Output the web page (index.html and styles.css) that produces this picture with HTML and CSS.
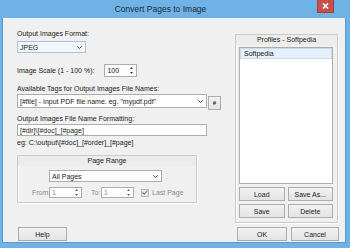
FILE: index.html
```html
<!DOCTYPE html>
<html lang="en">

<head>
    <meta charset="UTF-8">
    <meta name="viewport" content="width=device-width, initial-scale=1.0">
    <title>Convert Pages to Image</title>
    <link rel="stylesheet" href="styles.css">
</head>

<body>
    <div class="window">
        <div class="titlebar">
            <div class="title">Convert Pages to Image</div>
            <div class="close">
                <svg width="7" height="6" viewBox="0 0 7 6">
                    <path d="M1 0.5 L6 5.5 M6 0.5 L1 5.5" stroke="#fff" stroke-width="1.6" />
                </svg>
            </div>
        </div>

        <div class="content">
            <div class="main">
                <div class="left">
                    <div class="label">Output Images Format:</div>
                    <div class="combo combo-format">
                        <span>JPEG</span>
                        <svg class="arrow" width="5" height="3" viewBox="0 0 5 3"><path d="M0.3 0.3 L2.5 2.5 L4.7 0.3" fill="none" stroke="#333" stroke-width="0.9" /></svg>
                    </div>

                    <div class="row scale-row">
                        <span class="label">Image Scale (1 - 100 %):</span>
                        <div class="spin spin-scale">
                            <span>100</span>
                            <svg class="spin-arrows" width="3" height="7" viewBox="0 0 3 7"><path d="M1.5 0 L3 2 L0 2 Z M1.5 7 L3 5 L0 5 Z" fill="#333" /></svg>
                        </div>
                    </div>

                    <div class="label label-tags">Available Tags for Output Images File Names:</div>
                    <div class="row tags-row">
                        <div class="combo combo-tags">
                            <span>[#file] - Input PDF file name. eg. "mypdf.pdf"</span>
                            <svg class="arrow" width="5" height="3" viewBox="0 0 5 3"><path d="M0.3 0.3 L2.5 2.5 L4.7 0.3" fill="none" stroke="#333" stroke-width="0.9" /></svg>
                        </div>
                        <div class="btn btn-hash">#</div>
                    </div>

                    <div class="label label-format">Output Images File Name Formatting:</div>
                    <div class="textbox">[#dir]\[#doc]_[#page]</div>
                    <div class="label label-eg">eg: C:\output\[#doc]_[#order]_[#page]</div>

                    <div class="group range">
                        <div class="group-title">Page Range</div>
                        <div class="combo combo-range">
                            <span>All Pages</span>
                            <svg class="arrow" width="5" height="3" viewBox="0 0 5 3"><path d="M0.3 0.3 L2.5 2.5 L4.7 0.3" fill="none" stroke="#333" stroke-width="0.9" /></svg>
                        </div>
                        <div class="row range-row">
                            <span class="label disabled lbl-from">From:</span>
                            <div class="spin spin-small disabled">
                                <span>1</span>
                                <svg class="spin-arrows" width="3" height="7" viewBox="0 0 3 7"><path d="M1.5 0 L3 2 L0 2 Z M1.5 7 L3 5 L0 5 Z" fill="#666" /></svg>
                            </div>
                            <span class="label disabled lbl-to">To:</span>
                            <div class="spin spin-small disabled">
                                <span>1</span>
                                <svg class="spin-arrows" width="3" height="7" viewBox="0 0 3 7"><path d="M1.5 0 L3 2 L0 2 Z M1.5 7 L3 5 L0 5 Z" fill="#666" /></svg>
                            </div>
                            <div class="check">
                                <svg width="6" height="5" viewBox="0 0 6 5"><path d="M0.5 2.5 L2.2 4.2 L5.5 0.5" fill="none" stroke="#7a7a7a" stroke-width="1.1" /></svg>
                            </div>
                            <span class="label disabled">Last Page</span>
                        </div>
                    </div>
                </div>

                <div class="right">
                    <div class="group profiles">
                        <div class="group-title">Profiles - Softpedia</div>
                        <div class="list">
                            <div class="list-item selected">Softpedia</div>
                        </div>
                        <div class="btn-grid">
                            <div class="btn">Load</div>
                            <div class="btn">Save As...</div>
                            <div class="btn">Save</div>
                            <div class="btn">Delete</div>
                        </div>
                    </div>
                </div>
            </div>

            <div class="footer">
                <div class="btn btn-help">Help</div>
                <div class="footer-right">
                    <div class="btn btn-ok">OK</div>
                    <div class="btn btn-cancel">Cancel</div>
                </div>
            </div>
        </div>
    </div>
</body>

</html>
```

FILE: styles.css
```css
* {
    margin: 0;
    padding: 0;
    box-sizing: border-box;
}

body {
    width: 350px;
    height: 248px;
    overflow: hidden;
    font-family: 'Liberation Sans', Arial, sans-serif;
    font-size: 7px;
    color: #1a1a1a;
    background: #6fb3e6;
}

.window {
    width: 350px;
    height: 248px;
    background: #6fb3e6;
    padding: 0 4px 5px 2px;
    display: flex;
    flex-direction: column;
}

.titlebar {
    height: 18px;
    display: flex;
    align-items: flex-start;
}

.title {
    flex: 1;
    text-align: center;
    font-size: 8.5px;
    line-height: 18px;
    color: #1e2a36;
    padding-left: 2px;
}

.close {
    width: 17px;
    height: 13px;
    margin-right: 12px;
    background: #c8504b;
    border: 1px solid #a5403c;
    border-top: none;
    display: flex;
    align-items: center;
    justify-content: center;
}

.content {
    flex: 1;
    background: #f0f0f0;
    border: 1px solid #5b9bd0;
    border-top: none;
    padding: 11px 6px 0 14px;
    display: flex;
    flex-direction: column;
}

.main {
    display: flex;
    gap: 14px;
}

.left {
    width: 204px;
}

.right {
    width: 103px;
    padding-top: 5px;
}

.label {
    line-height: 10px;
    white-space: nowrap;
}

.row {
    display: flex;
    align-items: center;
}

/* combo boxes and text fields */
.combo,
.textbox,
.spin {
    background: #fff;
    border: 1px solid #abadb3;
    display: flex;
    align-items: center;
    padding-left: 2px;
    white-space: nowrap;
}

.combo span,
.spin span {
    flex: 1;
}

.combo .arrow {
    margin-right: 3px;
}

.combo-format {
    width: 69px;
    height: 12px;
    margin-top: 2px;
    background: #f3f7fb;
    border-color: #a3c2e4;
}

.scale-row {
    margin-top: 11px;
    height: 13px;
}

.spin-scale {
    margin-left: 10px;
    width: 33px;
    height: 13px;
}

.spin-arrows {
    margin-right: 3px;
}

.label-tags {
    margin-top: 7px;
}

.tags-row {
    align-items: flex-start;
    height: 16px;
}

.combo-tags {
    width: 190px;
    height: 14px;
}

.btn {
    background: linear-gradient(#f2f2f2, #e3e3e3);
    border: 1px solid #acacac;
    display: flex;
    align-items: center;
    justify-content: center;
    white-space: nowrap;
}

.btn-hash {
    width: 13px;
    height: 14px;
    margin-top: 2px;
    margin-left: 1px;
    font-size: 6px;
    font-weight: bold;
}

.label-format {
    margin-top: 4px;
}

.textbox {
    width: 190px;
    height: 12px;
}

.label-eg {
    margin-top: 2px;
}

/* group boxes */
.group {
    border: 1px solid #c9c9c9;
    box-shadow: inset 1px 1px 0 #fff, 1px 1px 0 #fff;
}

.group-title {
    height: 10px;
    line-height: 10px;
    text-align: center;
    background: #ececec;
}

.range {
    width: 180px;
    height: 48px;
    margin-top: 7px;
}

.combo-range {
    width: 113px;
    height: 12px;
    margin: 4px 0 0 31px;
}

.range-row {
    margin-top: 5px;
    height: 11px;
}

.disabled {
    color: #8a8a8a;
}

.lbl-from {
    margin-left: 14px;
    width: 17px;
}

.spin-small {
    width: 33px;
    height: 11px;
}

.lbl-to {
    margin-left: 9px;
    width: 10px;
}

.check {
    width: 8px;
    height: 8px;
    margin: 0 3px 0 7px;
    border: 1px solid #bcbcbc;
    background: #e6e6e6;
    display: flex;
    align-items: center;
    justify-content: center;
}

.profiles {
    height: 189px;
    padding: 0 4px 4px 3px;
}

.profiles .group-title {
    margin: 0 -4px 0 -3px;
}

.list {
    height: 137px;
    margin-top: 2px;
    background: #fff;
    border: 1px solid #abadb3;
}

.list-item {
    height: 11px;
    line-height: 11px;
    padding-left: 3px;
}

.list-item.selected {
    background: #e5f0fb;
    border: 1px solid #c5dcf3;
    line-height: 9px;
}

.btn-grid {
    margin-top: 3px;
    display: grid;
    grid-template-columns: 1fr 1fr;
    grid-auto-rows: 14px;
    gap: 3px;
}

.footer {
    margin-top: 4px;
    display: flex;
    justify-content: space-between;
    height: 14px;
}

.btn-help {
    width: 49px;
    margin-left: 1px;
}

.footer-right {
    display: flex;
    gap: 4px;
}

.btn-ok {
    width: 50px;
}

.btn-cancel {
    width: 48px;
}
```
